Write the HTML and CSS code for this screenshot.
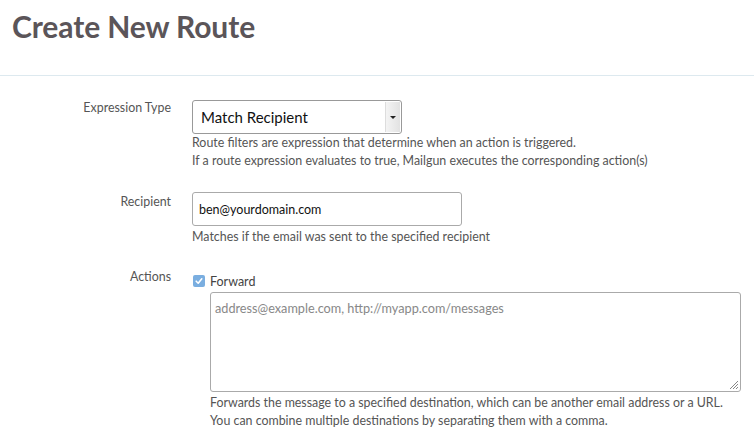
FILE: index.html
```html
<!DOCTYPE html>
<html>
<head>
<meta charset="utf-8">
<link rel="stylesheet" href="styles.css">
</head>
<body>
<header class="page-header">
  <h1 class="title">Create New Route</h1>
</header>
<form class="route-form">
  <div class="row row-expr">
    <label class="label">Expression Type</label>
    <div class="field">
      <div class="select">
        <span class="select-value">Match Recipient</span>
        <span class="select-btn"><span class="caret"></span></span>
      </div>
      <p class="help">Route filters are expression that determine when an action is triggered.<br>If a route expression evaluates to true, Mailgun executes the corresponding action(s)</p>
    </div>
  </div>
  <div class="row row-recipient">
    <label class="label">Recipient</label>
    <div class="field">
      <div class="input">ben@yourdomain.com</div>
      <p class="help">Matches if the email was sent to the specified recipient</p>
    </div>
  </div>
  <div class="row row-actions">
    <label class="label">Actions</label>
    <div class="field">
      <div class="check-line">
        <span class="checkbox"><svg width="10" height="10" viewBox="0 0 10 10"><path d="M2.2 5.2 L4.2 7.2 L7.8 2.8" fill="none" stroke="#fff" stroke-width="1.6" stroke-linecap="round" stroke-linejoin="round"/></svg></span>
        <span class="check-text">Forward</span>
      </div>
      <div class="sub">
        <div class="textarea">
          <span class="placeholder">address@example.com, http://myapp.com/messages</span>
          <svg class="grip" width="11" height="11" viewBox="0 0 11 11"><path d="M10 2 L2 10 M10 5 L5 10 M10 8 L8 10" stroke="#888" stroke-width="1"/></svg>
        </div>
        <p class="help">Forwards the message to a specified destination, which can be another email address or a URL.<br>You can combine multiple destinations by separating them with a comma.</p>
      </div>
    </div>
  </div>
</form>
</body>
</html>
```
FILE: styles.css
```css
html, body {
  margin: 0;
  padding: 0;
  background: #fff;
}
body {
  font-family: "Lato", "Open Sans", sans-serif;
  color: #555;
  width: 754px;
  height: 437px;
  overflow: hidden;
}
.page-header {
  height: 76px;
  border-bottom: 1px solid #dde9ef;
  box-sizing: border-box;
  padding: 7px 0 0 12px;
}
.title {
  margin: 0;
  font-size: 30px;
  line-height: 38px;
  font-weight: 700;
  color: #5b5559;
  letter-spacing: -0.1px;
}
.route-form {
  padding-top: 24px;
}
.row {
  display: flex;
  gap: 21px;
}
.label {
  width: 171px;
  flex: none;
  text-align: right;
  font-size: 12.4px;
  line-height: 18px;
  color: #555;
}
.field {
  flex: 1;
}
.help {
  margin: 0;
  font-size: 12.4px;
  line-height: 18px;
  color: #555;
}
.select {
  width: 210px;
  height: 34px;
  box-sizing: border-box;
  border: 1px solid #999;
  border-radius: 3px;
  display: flex;
  align-items: center;
}
.select-value {
  flex: 1;
  padding-left: 8px;
  font-size: 15px;
  color: #111;
}
.select-btn {
  width: 14px;
  height: 30px;
  margin-right: 1px;
  background: linear-gradient(to right, #f4f4f4, #e2e2e2);
  border-left: 1px solid #ddd;
  display: flex;
  align-items: center;
  justify-content: center;
}
.caret {
  width: 0;
  height: 0;
  border-left: 3px solid transparent;
  border-right: 3px solid transparent;
  border-top: 3px solid #222;
}
.row-expr .label {
  margin-top: -1px;
}
.row-recipient {
  margin-top: 22px;
}
.row-recipient .label {
  margin-top: 1px;
}
.input {
  width: 270px;
  height: 34px;
  box-sizing: border-box;
  border: 1px solid #aaa;
  border-radius: 3px;
  padding: 0 6px;
  display: flex;
  align-items: center;
  font-size: 12.5px;
  color: #111;
  margin-bottom: 2px;
}
.row-actions {
  margin-top: 26px;
}
.row-actions .label {
  margin-top: -4px;
}
.check-line {
  display: flex;
  align-items: center;
  gap: 5px;
  height: 18px;
  margin-left: 1px;
}
.checkbox {
  width: 12px;
  height: 12px;
  border-radius: 2px;
  background: #7aaee0;
  display: flex;
  align-items: center;
  justify-content: center;
}
.check-text {
  font-size: 12.5px;
  color: #444;
}
.sub {
  margin-left: 18px;
  margin-top: 2px;
}
.textarea {
  width: 531px;
  height: 100px;
  box-sizing: border-box;
  border: 1px solid #aaa;
  border-radius: 3px;
  position: relative;
  padding: 4px 4px;
  margin-bottom: 2px;
}
.placeholder {
  font-size: 12.7px;
  color: #888;
}
.grip {
  position: absolute;
  right: 1px;
  bottom: 1px;
}
```
